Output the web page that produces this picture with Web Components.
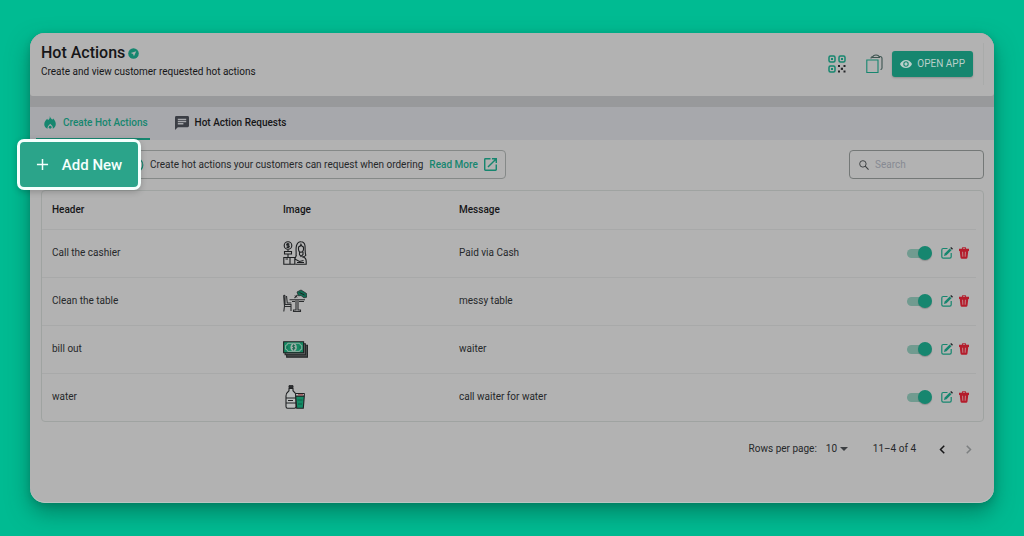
<!DOCTYPE html>
<html lang="en">
<head>
<meta charset="utf-8">
<meta name="viewport" content="width=device-width, initial-scale=1">
<title>Hot Actions</title>
<style>
  :root {
    --brand: #16866f;
    --surface: #b2b2b2;
    --ink: #161618;
    --line: #9fa3a1;
  }
  * { box-sizing: border-box; }
  body {
    margin: 0;
    min-height: 100vh;
    padding: 33px 30px;
    display: flex;
    background: #00bb92;
    color: var(--ink);
    font: 10px/16px Roboto, "Liberation Sans", sans-serif;
  }
</style>
</head>
<body>
<hot-actions-page></hot-actions-page>

<script>
const ICONS = {
  verified: ['0 0 24 24', `<circle cx="12" cy="12" r="11.500" fill="#16866f"/><path fill="#a9b3b0" d="M6 11l12-4-5 11-2-5z"/>`],
  qr: ['0 0 18 18', `<g fill="none" stroke="#16866f" stroke-width="1.500"><rect x="1" y="1" width="6" height="6" rx="1.500"/><rect x="11" y="1" width="6" height="6" rx="1.500"/><rect x="1" y="11" width="6" height="6" rx="1.500"/></g><g fill="#16866f"><rect x="3" y="3" width="2" height="2"/><rect x="13" y="3" width="2" height="2"/><rect x="3" y="13" width="2" height="2"/></g><g fill="#242629"><rect x="10" y="10" width="2" height="2"/><rect x="15.500" y="10" width="2" height="2"/><rect x="12.800" y="12.700" width="2.200" height="2.200"/><rect x="10" y="15.500" width="2" height="2"/><rect x="15.500" y="15.500" width="2" height="2"/></g>`],
  copy: ['0 0 17 20', `<g fill="none" stroke-width="1.100"><path stroke="#3d5450" d="M5 4.500Q5 2.500 7 2.500M13 2.500h1q2 0 2 2V14q0 1.500-1.500 1.500M6.500 3.500Q7 1 10 1t3.500 2.500z"/><path stroke="#16866f" d="M.8 6h11.200v12.500H.8z"/></g>`],
  eye: ['1 4 22 16', `<path fill="currentColor" d="M12 4.500C7 4.500 2.700 7.600 1 12c1.700 4.400 6 7.500 11 7.500s9.300-3.100 11-7.500c-1.700-4.400-6-7.500-11-7.500zM12 17a5 5 0 110-10 5 5 0 010 10zm0-8a3 3 0 100 6 3 3 0 000-6z"/>`],
  fire: ['0 0 24 26', `<path fill="currentColor" d="M11.500 0c1 4 3.500 5 5 7.500l2-2.500C22 9 24 13 23.500 17c-.5 4-2.500 7-6 8.500 1-4-1.500-7-5-10-3.500 3-6 6-5.500 10C3 24 .5 21 .5 16.500.500 11 4 8 6.500 5.500l1.500 3C11 6 12 4 11.500 0z"/><circle cx="12.300" cy="22.500" r="2.800" fill="currentColor"/>`],
  chat: ['2 2 20 20', `<path fill="#3b3e45" d="M20 2H4a2 2 0 00-2 2v18l4-4h14a2 2 0 002-2V4a2 2 0 00-2-2zM6 9h12v2H6V9zm8 5H6v-2h8v2zm4-6H6V6h12v2z"/>`],
  plus: ['0 0 14 14', `<path fill="none" stroke="currentColor" stroke-width="1.600" d="M7 1v12M1 7h12"/>`],
  info: ['0 0 16 16', `<circle cx="8" cy="8" r="6.800" fill="none" stroke="currentColor" stroke-width="1.200"/><path stroke="currentColor" d="M8 7v5M8 4v1.500"/>`],
  external: ['3 3 18 18', `<path fill="currentColor" d="M19 19H5V5h7V3H5a2 2 0 00-2 2v14a2 2 0 002 2h14a2 2 0 002-2v-7h-2v7zM14 3v2h3.600l-9.800 9.800 1.400 1.400L19 6.400V10h2V3h-7z"/>`],
  search: ['0 0 18 18', `<circle cx="7" cy="7" r="5.800" fill="none" stroke="currentColor" stroke-width="1.700"/><path stroke="currentColor" stroke-width="2" d="M11.200 11.200l6 6"/>`],
  edit: ['0 0 12 12', `<path fill="none" stroke="#16866f" stroke-width="1.200" d="M6.500 1.500H2.200Q.8 1.500.8 3v6.800q0 1.400 1.400 1.400h6.600q1.400 0 1.400-1.400V6"/><path fill="#16866f" d="M8.700 1.500l1.800 1.800L5.500 8.300l-2.600.8.800-2.600z"/><path fill="#22282b" d="M9.200 1l1-1 1.800 1.800-1 1z"/>`],
  trash: ['0 0 12 14', `<path fill="#b41c2b" d="M3.500 2V1Q3.500 0 4.500 0h3q1 0 1 1v1H12v2.500H0V2zM.8 4h10.400L10.200 12.500Q10 14 8.500 14h-5Q2 14 1.800 12.500z"/><path stroke="#c09a9c" stroke-width="1" d="M4.300 5.500l.3 6M7.700 5.500l-.3 6"/><path stroke="#b2b2b2" stroke-width=".8" d="M4.700 1.500h2.600"/>`],
  caret: ['0 0 10 5', `<path fill="#3c3f42" d="M0 0h10L5 5z"/>`],
  prev: ['0 0 8 12', `<path fill="none" stroke="currentColor" stroke-width="2" d="M7 1L2 6l5 5"/>`],
  next: ['0 0 8 12', `<path fill="none" stroke="currentColor" stroke-width="2" d="M1 1l5 5-5 5"/>`],
  cashier: ['0 0 24 24', `<g fill="none" stroke="#1d1f21" stroke-width="1.100"><circle cx="5" cy="4.500" r="3.800"/><path d="M6.500 3.200Q3.500 2.200 3.700 4q2.800.7 2.600 1.500-.3 1.500-2.800.4M5 2v5M5 8.500v2M1.500 10.500h7V13h-7zM5 13v3M.8 16.500h11v6.700H.8zM7 16.500v6.700M12.500 23.200h10.700v-3q0-4-4.200-4.500M13 14.500C13.500 11 12.500 8 13.500 4.500q1.500-4 4.500-3.700 3.500.2 4 4c.3 3-.2 7 .8 9.500q-1 1.500-2.800 1.500M15.500 6q2-.5 2.500-2.500Q19 6 20.500 6v2.500q-.5 2.800-2.600 2.800T15.500 8.500zM16.500 11v2.500L18 15.500l2-2V11M13.500 14l-1.700 4 4.700 2.500 4-1"/></g><path stroke="#1d1f21" d="M2.500 18h2.500M14 21.500h7"/>`],
  table: ['0 0 24 24', `<g fill="none" stroke="#2b2d2f" stroke-width="1.100"><path d="M2 6.500v9h6V22M2 6.500q-1.500-.5-1.300 1L1.500 17 .8 22.500M3.500 7l.8 7h4M2 17.500h6M6.500 10.800h15.500M13 11.500v9.500h-2.500v1.500h7v-1.500H15v-9.500M9 12.500h3M16 12.500h5M11.500 9l3-3"/></g><path fill="#116d54" stroke="#26302e" stroke-width=".8" d="M14 3l4-2 5.500 3.500L24 8l-3 .8L18 6.500l-2.500.3z"/><path stroke="#1d2724" d="M16.500 3.500l5 2.500M12 6.500l2 2"/>`],
  cash: ['0 0 24 16', `<path fill="#4b4e4e" stroke="#222526" d="M3.500 4h20v11.300h-20z"/><path fill="#666969" stroke="#222526" d="M2 2.500h19.500V13H2z"/><path fill="#168862" stroke="#1b2020" d="M.6.600h19.200v10.600H.6z"/><path fill="none" stroke="#a4b7ae" stroke-width=".8" d="M4.500 2H16q0 2 2 2v3.800q-2 0-2 2H4.500q0-2-2-2V4q2 0 2-2z"/><ellipse cx="10.200" cy="5.900" rx="3" ry="3.700" fill="#a3b0aa"/><path fill="none" stroke="#17664e" stroke-width=".9" d="M11.700 4.500q-2.800-1.300-2.700.5l2.600 1.500q0 1.800-2.900.7M10.200 3v6M4 5v2M16.300 5v2"/>`],
  bottle: ['0 0 20 24', `<path fill="#b9bcbc" stroke="#202224" stroke-width="1.100" d="M4 3.500h4v2.200Q11 8 11 11v10.500q0 1.700-1.500 1.700h-7Q1 23.200 1 21.500V11q0-3 3-5.300z"/><path fill="#303335" stroke="#202224" d="M4 .7h4v2H4z"/><path fill="none" stroke="#202224" stroke-width="1.100" d="M1 13h10M1 18h10M3 15.500h5"/><path fill="#138a65" stroke="#202224" stroke-width="1.100" d="M10.700 11h8.600l-1 12.200h-6.600z"/><path fill="#bec1c0" stroke="#202224" d="M10.500 8.500h9l-.3 2.500h-8.500z"/><path stroke="#9f3a42" d="M13 9.800h5"/><path stroke="#0d5f47" d="M12.500 15h5M13 19h4"/>`]
};

class BaseElement extends HTMLElement {
  constructor() {
    super();
    this.attachShadow({ mode: 'open' });
  }
  paint(css, html) {
    this.shadowRoot.innerHTML = `<style>*{box-sizing:border-box}${css}</style>${html}`;
  }
}

class AppIcon extends BaseElement {
  connectedCallback() {
    const [box, body] = ICONS[this.getAttribute('name')];
    this.paint(`
      :host { display: block; flex: none; width: 16px; height: 16px; }
      svg { display: block; width: 100%; height: 100%; }`,
      `<svg viewBox="${box}" aria-hidden="true">${body}</svg>`);
  }
}
customElements.define('app-icon', AppIcon);

class PageHeader extends BaseElement {
  connectedCallback() {
    this.paint(`
      :host { display: flex; justify-content: space-between; align-items: flex-start;
        height: 63px; padding: 10px 10px 10px 11px; background: var(--surface); }
      .title { display: flex; align-items: center; gap: 3px; }
      h1 { margin: 0; font-size: 16px; line-height: 20px; font-weight: 500; }
      p { margin: 1px 0 0; }
      .title app-icon { width: 11px; height: 11px; }
      .tools { display: flex; align-items: center; height: 42px; padding-right: 10px; gap: 9px;
        border-right: 1px solid #a9abaa; }
      button { font: inherit; border: 0; padding: 0; background: none; cursor: pointer; color: inherit; }
      .qr { margin-right: 11px; }
      .qr app-icon { width: 18px; height: 18px; }
      .copy app-icon { width: 17px; height: 20px; }
      .open { display: flex; align-items: center; justify-content: center; gap: 5px;
        height: 26px; padding: 0 8px; border-radius: 3px; background: var(--brand);
        color: #b9cfca; box-shadow: 0 1px 2px #0003; }
      .open app-icon { width: 12px; height: 10px; }`,
      `<div><div class="title"><h1>Hot Actions</h1><app-icon name="verified"></app-icon></div>
        <p>Create and view customer requested hot actions</p></div>
      <div class="tools">
        <button class="qr" aria-label="QR code"><app-icon name="qr"></app-icon></button>
        <button class="copy" aria-label="Copy link"><app-icon name="copy"></app-icon></button>
        <button class="open"><app-icon name="eye"></app-icon>OPEN APP</button>
      </div>`);
  }
}
customElements.define('page-header', PageHeader);

class TabBar extends BaseElement {
  connectedCallback() {
    this.paint(`
      :host { display: flex; height: 33px; padding: 0 6px; gap: 15px; background: #a7a8ac; }
      button { display: flex; align-items: center; gap: 7px; padding: 0 8px; border: 0;
        border-bottom: 2px solid transparent; background: none; font: inherit; font-weight: 500;
        color: var(--ink); cursor: pointer; }
      button[aria-selected=true] { color: var(--brand); border-color: var(--brand); padding: 0 2px 0 8px; }
      app-icon { width: 12px; height: 13px; }
      .requests app-icon { width: 14px; height: 14px; }
      .requests { gap: 6px; padding-left: 10px; }`,
      `<button role="tab" aria-selected="true"><app-icon name="fire"></app-icon>Create Hot Actions</button>
       <button class="requests" role="tab" aria-selected="false"><app-icon name="chat"></app-icon>Hot Action Requests</button>`);
    this.setAttribute('role', 'tablist');
  }
}
customElements.define('tab-bar', TabBar);

class AddButton extends BaseElement {
  connectedCallback() {
    this.paint(`
      :host { display: block; }
      button { display: flex; align-items: center; justify-content: center; gap: 13px;
        width: 100%; height: 100%; padding: 0; border: 3px solid #f4fffd; border-radius: 7px;
        background: #2ba48a; color: #f4fffd; font: 500 15px/20px Roboto, sans-serif;
        cursor: pointer; box-shadow: 0 2px 6px #0003; }
      app-icon { width: 13px; height: 13px; }`,
      `<button><app-icon name="plus"></app-icon><slot></slot></button>`);
  }
}
customElements.define('add-button', AddButton);

class ActionToolbar extends BaseElement {
  connectedCallback() {
    this.paint(`
      :host { position: relative; display: flex; justify-content: space-between; padding: 10px 10px 11px 89px; }
      /* the highlighted button floats over the start of the bar */
      add-button { position: absolute; left: -13px; top: -1px; width: 124px; height: 51px; }
      .info, .search { display: flex; align-items: center; height: 29px;
        border: 1px solid #858988; border-radius: 4px; }
      .info { padding: 0 8px; gap: 6px; color: #26282a; }
      .info app-icon { color: var(--brand); }
      a { display: flex; align-items: center; gap: 6px; color: var(--brand);
        font-weight: 500; text-decoration: none; }
      .info a app-icon { width: 13px; height: 13px; }
      .search { width: 135px; padding: 0 9px; gap: 6px; border-color: #747877; color: #3c3f41; }
      .search app-icon { width: 10px; height: 10px; }
      input { flex: 1; min-width: 0; border: 0; padding: 0; outline: 0; background: none; font: inherit; color: inherit; }
      input::placeholder { color: #878a92; opacity: 1; }`,
      `<div class="info"><app-icon name="info"></app-icon>
        <span>Create hot actions your customers can request when ordering</span>
        <a href="#read-more">Read More<app-icon name="external"></app-icon></a></div>
      <label class="search"><app-icon name="search"></app-icon><input type="search" placeholder="Search" aria-label="Search"></label>
      <add-button>Add New</add-button>`);
  }
}
customElements.define('action-toolbar', ActionToolbar);

class ToggleSwitch extends BaseElement {
  connectedCallback() {
    this.paint(`
      :host { display: block; width: 25px; height: 14px; }
      input { appearance: none; display: flex; align-items: center; width: 100%; height: 100%; margin: 0; cursor: pointer; }
      input::after { content: ""; order: -1; flex: 1; height: 9px; margin-right: -7px; border-radius: 5px 0 0 5px; background: #719b90; }
      input::before { content: ""; z-index: 1; width: 14px; height: 14px; border-radius: 50%; background: #8e9492; }
      input:checked::before { background: var(--brand); box-shadow: 0 1px 1px #0003; }`,
      `<input type="checkbox" role="switch" checked aria-label="${this.getAttribute('label')}">`);
  }
}
customElements.define('toggle-switch', ToggleSwitch);

const ACTIONS = [
  ['Call the cashier', 'cashier', 'Paid via Cash'],
  ['Clean the table', 'table', 'messy table'],
  ['bill out', 'cash', 'waiter'],
  ['water', 'bottle', 'call waiter for water']
];

class ActionTable extends BaseElement {
  connectedCallback() {
    const rows = ACTIONS.map(([header, image, message]) => `<tr>
      <td>${header}</td>
      <td><app-icon class="pic ${image}" name="${image}"></app-icon></td>
      <td>${message}</td>
      <td><div class="tools"><toggle-switch label="Enable ${header}"></toggle-switch>
        <button aria-label="Edit ${header}"><app-icon class="edit" name="edit"></app-icon></button>
        <button aria-label="Delete ${header}"><app-icon class="trash" name="trash"></app-icon></button></div></td>
    </tr>`).join('');
    this.paint(`
      :host { display: block; margin: 0 10px 0 11px; padding: 0 7px 0 0; border: 1px solid var(--line); border-radius: 4px; }
      table { width: 100%; table-layout: fixed; border-collapse: collapse; }
      th, td { height: 48px; padding: 0 0 0 10px; text-align: left; color: #26282a; }
      th { height: 38px; font-weight: 500; color: var(--ink); }
      td { border-top: 1px solid #a8a9a9; }
      .first { width: 231px; }
      .second { width: 176px; }
      .last { width: 112px; }
      .pic { width: 24px; height: 24px; }
      .pic.cash { width: 25px; height: 17px; }
      .tools { display: flex; align-items: center; justify-content: flex-end; gap: 6px; padding-right: 7px; }
      toggle-switch { margin-right: 3px; }
      button { border: 0; padding: 0; background: none; cursor: pointer; }
      .edit { width: 12px; height: 12px; }
      .trash { width: 10px; height: 12px; }`,
      `<table><colgroup><col class="first"><col class="second"><col><col class="last"></colgroup>
      <thead><tr><th>Header</th><th>Image</th><th>Message</th><th aria-label="Controls"></th></tr></thead>
      <tbody>${rows}</tbody></table>`);
  }
}
customElements.define('action-table', ActionTable);

class TablePager extends BaseElement {
  connectedCallback() {
    this.paint(`
      :host { display: flex; justify-content: flex-end; align-items: center; padding: 19px 22px 0 0; color: #26282a; }
      label { display: flex; align-items: center; }
      .pick { display: flex; align-items: center; margin-left: 9px; }
      select { appearance: none; width: 22px; margin-right: -8px; padding: 0; border: 0; background: none; font: inherit; color: inherit; }
      .pick app-icon { width: 8px; height: 4px; pointer-events: none; }
      .range { margin: 0 23px 0 25px; }
      button { border: 0; padding: 0; background: none; color: var(--ink); cursor: pointer; }
      button + button { margin-left: 21px; }
      button:disabled { color: #7c7f80; cursor: default; }
      button app-icon { width: 6px; height: 9px; }`,
      `<label>Rows per page:<span class="pick"><select><option>10</option><option>25</option></select><app-icon name="caret"></app-icon></span></label>
      <span class="range">11–4 of 4</span>
      <button aria-label="Previous page"><app-icon name="prev"></app-icon></button>
      <button aria-label="Next page" disabled><app-icon name="next"></app-icon></button>`);
  }
}
customElements.define('table-pager', TablePager);

class HotActionsPage extends BaseElement {
  connectedCallback() {
    this.paint(`
      :host { display: flex; flex: 1; min-width: 0; }
      main { flex: 1; min-width: 0; border-radius: 15px; background: var(--surface);
        box-shadow: inset 0 -1px #b9c6c2, 0 10px 22px #00503c80, 0 2px 6px #00503c40; }
      .top { padding-bottom: 11px; background: #98999b; border-radius: 15px 15px 0 0; }
      page-header { border-radius: 15px 15px 3px 3px; }`,
      `<main><div class="top"><page-header></page-header></div>
        <tab-bar></tab-bar><action-toolbar></action-toolbar>
        <action-table></action-table><table-pager></table-pager></main>`);
  }
}
customElements.define('hot-actions-page', HotActionsPage);
</script>
</body>
</html>
